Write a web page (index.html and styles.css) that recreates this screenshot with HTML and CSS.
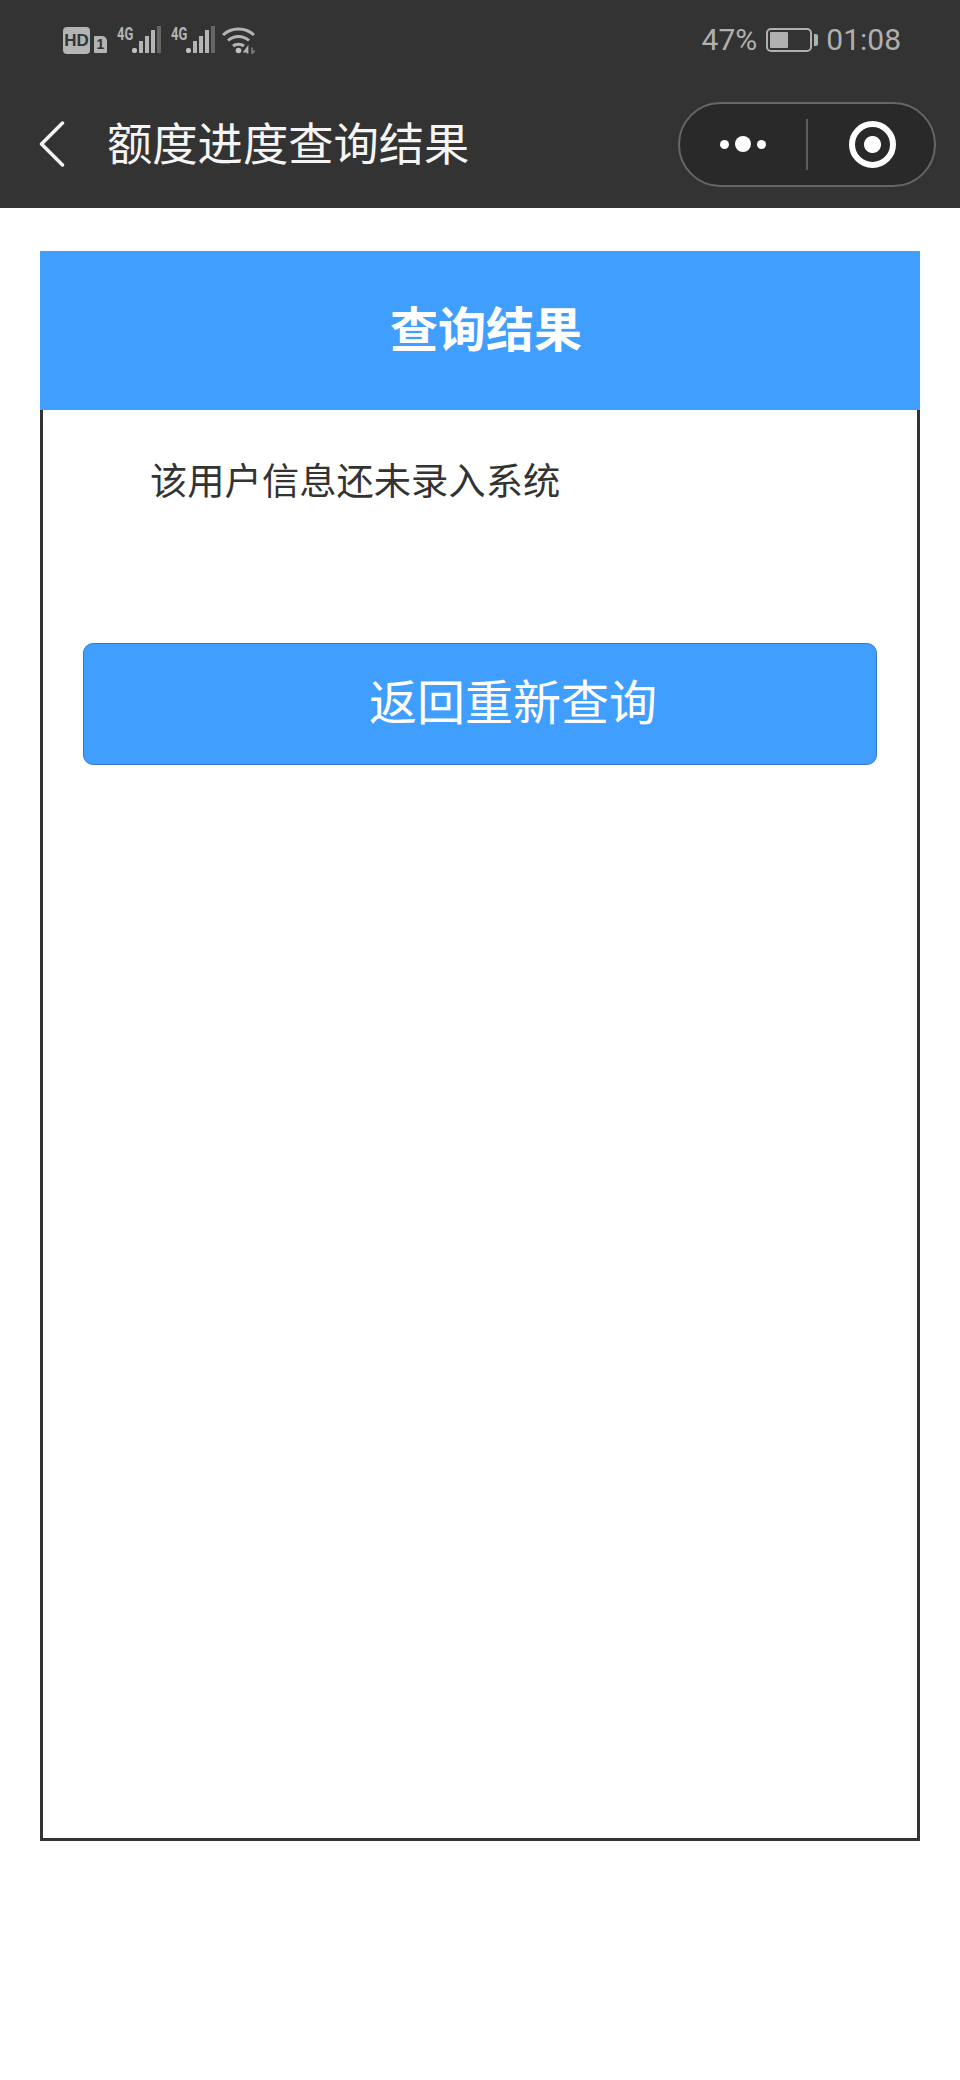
FILE: index.html
```html
<!DOCTYPE html>
<html lang="zh-CN">
<head>
    <meta charset="UTF-8">
    <meta name="viewport" content="width=device-width, initial-scale=1.0">
    <title>额度进度查询结果</title>
    <link rel="stylesheet" href="styles.css">
</head>
<body>
    <!-- Top bar -->
    <div class="topbar">
        <div class="status-bar">
            <div class="status-left">
                <span class="hd-badge">HD</span>
                <span class="sim-badge">1</span>
                <span class="signal">
                    <span class="signal-label">4G</span>
                    <svg width="30" height="28" viewBox="0 0 30 28">
                        <rect x="0" y="22" width="5" height="5" rx="2" fill="#c2c2c2"/>
                        <rect x="7" y="15" width="4" height="12" fill="#b4b4b4"/>
                        <rect x="13" y="10" width="4" height="17" fill="#b4b4b4"/>
                        <rect x="19" y="4" width="4" height="23" fill="#b4b4b4"/>
                        <rect x="25" y="0" width="4" height="27" fill="#666"/>
                    </svg>
                </span>
                <span class="signal">
                    <span class="signal-label">4G</span>
                    <svg width="30" height="28" viewBox="0 0 30 28">
                        <rect x="0" y="22" width="5" height="5" rx="2" fill="#c2c2c2"/>
                        <rect x="7" y="15" width="4" height="12" fill="#b4b4b4"/>
                        <rect x="13" y="10" width="4" height="17" fill="#b4b4b4"/>
                        <rect x="19" y="4" width="4" height="23" fill="#b4b4b4"/>
                        <rect x="25" y="0" width="4" height="27" fill="#666"/>
                    </svg>
                </span>
                <svg class="wifi" width="33" height="28" viewBox="0 0 33 28" fill="none" stroke="#b4b4b4" stroke-width="3">
                    <path d="M1 9C9.500 1 23.500 1 32 9"/>
                    <path d="M6 14.500C12 9 21 9 27 14.500"/>
                    <path d="M11 20C14 17.500 19 17.500 22 20"/>
                    <circle cx="16.500" cy="24.500" r="2.800" fill="#c2c2c2" stroke="none"/>
                    <path d="M25.500 27.500V21.500L22.500 25.500H26" stroke-width="1.800"/>
                    <path d="M30 21.500V27.500L33 24.500" stroke="#777" stroke-width="1.800"/>
                </svg>
            </div>
            <div class="status-right">
                <span>47%</span>
                <span class="battery"><span class="battery-fill"></span></span>
                <span class="battery-tip"></span>
                <span class="clock">01:08</span>
            </div>
        </div>
        <div class="nav-bar">
            <svg class="back" width="26" height="46" viewBox="0 0 26 46" fill="none" stroke="#f2f2f2" stroke-width="3.500" stroke-linecap="round" stroke-linejoin="round">
                <path d="M23.500 2L2.500 23L23.500 44"/>
            </svg>
            <div class="nav-title">额度进度查询结果</div>
            <div class="capsule">
                <div class="capsule-part capsule-left">
                    <span class="dot"></span>
                    <span class="dot dot-big"></span>
                    <span class="dot"></span>
                </div>
                <div class="capsule-line"></div>
                <div class="capsule-part capsule-right">
                    <span class="target"></span>
                </div>
            </div>
        </div>
    </div>

    <!-- Result card -->
    <div class="content">
        <div class="card-head">查询结果</div>
        <div class="card-body">
            <p class="message">该用户信息还未录入系统</p>
            <button class="retry-btn">返回重新查询</button>
        </div>
    </div>
</body>
</html>
```

FILE: styles.css
```css
* {
    box-sizing: border-box;
    margin: 0;
    padding: 0;
}

body {
    font-family: "Noto Sans CJK SC", "Noto Sans", sans-serif;
    background: #fff;
    color: #333;
    width: 960px;
    height: 2080px;
    overflow: hidden;
}

/* Top bar */
.topbar {
    height: 208px;
    background: #333;
}

.status-bar {
    height: 80px;
    display: flex;
    justify-content: space-between;
    align-items: center;
    padding: 0 59px 0 63px;
}

.status-left {
    display: flex;
    align-items: flex-end;
    height: 28px;
}

.hd-badge {
    width: 27px;
    height: 27px;
    background: #b4b4b4;
    border-radius: 4px;
    color: #333;
    font: bold 17px/27px "Liberation Sans", sans-serif;
    text-align: center;
}

.sim-badge {
    width: 13px;
    height: 17px;
    margin-left: 4px;
    margin-bottom: 1px;
    background: #b4b4b4;
    border-radius: 1px 5px 1px 1px;
    color: #333;
    font: bold 14px/17px "Liberation Sans", sans-serif;
    text-align: center;
}

.signal {
    display: flex;
    align-items: flex-end;
    margin-left: 10px;
    height: 28px;
}

.signal + .signal {
    margin-left: 9px;
}

.signal-label {
    align-self: flex-start;
    width: 15px;
    color: #b4b4b4;
    font: bold 18px/15px "Roboto", sans-serif;
    transform: scaleX(0.72);
    transform-origin: left top;
}

.wifi {
    margin-left: 6px;
}

.status-right {
    display: flex;
    align-items: center;
    color: #b0b0b0;
    font: 30px/40px "Roboto", sans-serif;
}

.battery {
    width: 46px;
    height: 24px;
    margin-left: 9px;
    border: 2px solid #b0b0b0;
    border-radius: 5px;
    padding: 2px;
}

.battery-fill {
    display: block;
    width: 47%;
    height: 100%;
    background: #b0b0b0;
    border-radius: 1px;
}

.battery-tip {
    width: 4px;
    height: 12px;
    margin-left: 2px;
    background: #b0b0b0;
    border-radius: 0 2px 2px 0;
}

.clock {
    margin-left: 8px;
}

.nav-bar {
    height: 128px;
    display: flex;
    align-items: center;
    padding: 0 24px 0 39px;
}

.nav-title {
    flex: 1;
    height: 64px;
    margin-left: 42px;
    color: #f5f5f5;
    font-size: 45.3px;
    line-height: 58px;
}

.capsule {
    width: 258px;
    height: 85px;
    display: flex;
    align-items: center;
    background: #292929;
    border: 2px solid #666;
    border-radius: 43px;
}

.capsule-part {
    display: flex;
    justify-content: center;
    align-items: center;
    gap: 6px;
}

.capsule-left {
    width: 126px;
}

.capsule-right {
    flex: 1;
    padding-left: 3px;
}

.capsule-line {
    width: 2px;
    height: 51px;
    background: #5c5c5c;
}

.dot {
    width: 9px;
    height: 9px;
    background: #fff;
    border-radius: 50%;
}

.dot-big {
    width: 16px;
    height: 16px;
}

.target {
    width: 47px;
    height: 47px;
    border: 6px solid #fff;
    border-radius: 50%;
    background: radial-gradient(circle, #fff 0, #fff 8px, transparent 9px);
}

/* Result card */
.content {
    padding: 43px 40px 0;
}

.card-head {
    height: 159px;
    padding-left: 12px;
    background: #409eff;
    color: #fff;
    font-size: 48px;
    font-weight: bold;
    line-height: 151px;
    text-align: center;
}

.card-body {
    height: 1431px;
    padding: 0 40px;
    border: 3px solid #333;
    border-top: 0;
}

.message {
    padding: 41px 0 0 67px;
    font-size: 37.3px;
    line-height: 56px;
}

.retry-btn {
    display: block;
    width: 100%;
    height: 122px;
    margin-top: 136px;
    padding: 0 0 10px 66px;
    background: #409eff;
    border: 1px solid #3a74d0;
    border-radius: 10px;
    color: #fff;
    font-family: inherit;
    font-size: 48px;
}
```
